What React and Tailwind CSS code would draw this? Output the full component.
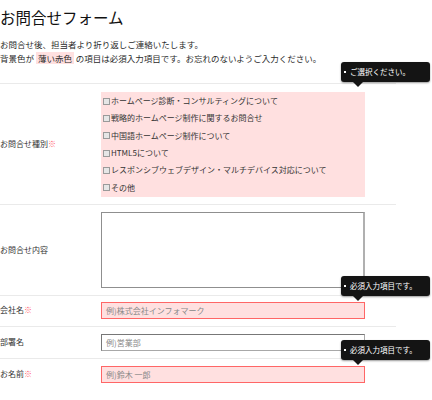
import React from 'react'

const jp = { fontFamily: '"Noto Sans CJK JP", "Noto Sans", sans-serif' }

const options = [
  'ホームページ診断・コンサルティングについて',
  '戦略的ホームページ制作に関するお問合せ',
  '中国語ホームページ制作について',
  'HTML5について',
  'レスポンシブウェブデザイン・マルチデバイス対応について',
  'その他',
]

const Tip = ({ top, text }) => (
  <div className="absolute left-[341px] w-[89px]" style={{ top }}>
    <div className="h-[20px] rounded-[3px] bg-[#141414] text-white text-[7.5px] leading-[20px] pl-[3px] flex items-center gap-[4px] shadow-[0_1px_2px_rgba(0,0,0,0.4)]">
      <span className="w-[2px] h-[2px] bg-white inline-block"></span>
      <span>{text}</span>
    </div>
    <div className="ml-[12px] w-0 h-0 border-l-[5px] border-r-[5px] border-t-[5px] border-l-transparent border-r-transparent border-t-[#141414]"></div>
  </div>
)

const Label = ({ text, req }) => (
  <div className="w-[101px] shrink-0 text-[8px] text-[#333]">
    {text}
    {req && <span className="text-[#ff5a6a]">※</span>}
  </div>
)

const App = () => {
  return (
    <div className="relative w-[432px] h-[400px] overflow-hidden bg-white text-[#333]" style={jp}>
      <div className="pt-[6px]">
        <h1 className="text-[15.5px] leading-[22px] font-normal text-[#111]">お問合せフォーム</h1>
        <div className="mt-[9px] text-[8.5px] leading-[14px] text-[#2a2a2a]">
          <p>お問合せ後、担当者より折り返しご連絡いたします。</p>
          <p>
            背景色が <span className="bg-[#ffe0e0] px-[2px]">薄い赤色</span> の項目は必須入力項目です。お忘れのないようご入力ください。
          </p>
        </div>
      </div>

      <div className="mt-[18px] w-[396px]">
        <div className="flex items-center border-t border-[#eaeaea] pt-[8px] pb-[7px]">
          <Label text="お問合せ種別" req />
          <div className="w-[264px] bg-[#ffe0e0] py-[0.5px]">
            {options.map((o, i) => (
              <div key={i} className="h-[17.33px] flex items-center text-[8px] leading-none pl-[2px]">
                <span className="w-[7px] h-[7px] border border-[#9a9a9a] bg-[#e6e6e6] mr-[1px] shrink-0"></span>
                {o}
              </div>
            ))}
          </div>
        </div>

        <div className="flex items-center border-t border-[#eaeaea] pt-[7px] pb-[7px]">
          <Label text="お問合せ内容" />
          <div className="w-[264px] h-[76px] border border-[#8f8f8f] border-r-2 border-r-[#b0b0b0] bg-white"></div>
        </div>

        <div className="flex items-center border-t border-[#eaeaea] pt-[6px] pb-[7px]">
          <Label text="会社名" req />
          <div className="w-[264px] h-[17px] border border-[#ff6666] bg-[#ffe0e0] text-[8px] text-[#888] leading-[15px] pl-[4px]">
            例)株式会社インフォマーク
          </div>
        </div>

        <div className="flex items-center border-t border-[#eaeaea] pt-[7px] pb-[7px]">
          <Label text="部署名" />
          <div className="w-[264px] h-[17px] border border-[#a8a8a8] border-t-[#777] border-l-[#777] bg-white text-[8px] text-[#888] leading-[15px] pl-[4px]">
            例)営業部
          </div>
        </div>

        <div className="flex items-center border-t border-[#eaeaea] pt-[7px] pb-[7px]">
          <Label text="お名前" req />
          <div className="w-[264px] h-[17px] border border-[#ff6666] bg-[#ffe0e0] text-[8px] text-[#888] leading-[15px] pl-[4px]">
            例)鈴木 一郎
          </div>
        </div>
      </div>

      <Tip top={62} text="ご選択ください。" />
      <Tip top={276} text="必須入力項目です。" />
      <Tip top={340} text="必須入力項目です。" />
    </div>
  )
}

export default App
